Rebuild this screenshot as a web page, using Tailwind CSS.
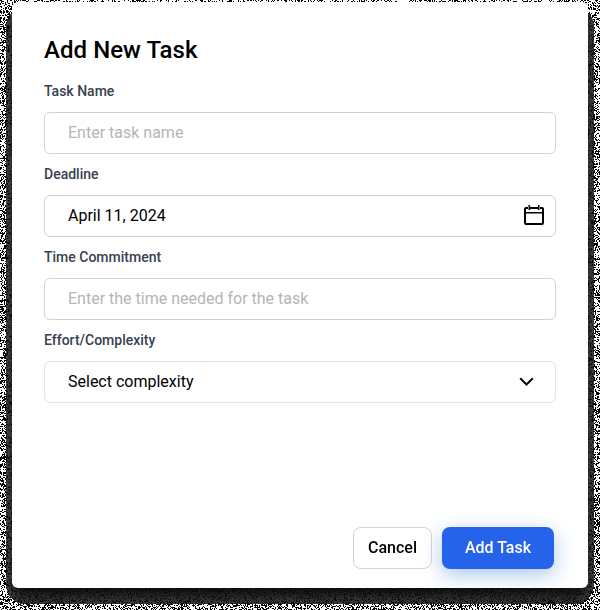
<!DOCTYPE html>
<html lang="en">
<head>
<meta charset="utf-8">
<title>Add New Task</title>
<script src="https://cdn.jsdelivr.net/npm/@tailwindcss/browser@4"></script>
</head>
<body class="relative w-[600px] h-[610px] overflow-hidden bg-white font-['Roboto',sans-serif] text-black">
<canvas id="grain" width="600" height="610" class="absolute inset-0" aria-hidden="true"></canvas>
<main class="relative mx-3 mt-0.5 h-[586px] rounded-md bg-white px-8 pt-8 flex flex-col overflow-hidden">
  <h1 class="text-2xl leading-8 font-medium tracking-[0.05px]">Add New Task</h1>
  <form class="flex flex-col mt-[15px]">
    <label class="text-sm leading-5 font-medium text-[#374151]">Task Name</label>
    <div class="mt-[11px] h-[42px] rounded-md border border-[#d1d1db] px-[23px] flex items-center text-base text-[#b5b5b5]">Enter task name</div>
    <label class="mt-[10px] text-sm leading-5 font-medium text-[#374151]">Deadline</label>
    <div class="mt-[11px] h-[42px] rounded-md border border-[#d1d1db] pl-[23px] pr-[9px] flex items-center justify-between text-base">
      <span>April 11, 2024</span>
      <svg class="size-6" viewBox="0 0 24 24" fill="none" stroke="black" stroke-width="2"><path d="M6 4H4A1 1 0 0 0 3 5V19A1 1 0 0 0 4 20H20A1 1 0 0 0 21 19V5A1 1 0 0 0 20 4H18M8 4H16"/><path stroke-width="1.600" d="M3 8.800H21M7.300 1V6M16.700 1V6"/></svg>
    </div>
    <label class="mt-[10px] text-sm leading-5 font-medium text-[#374151]">Time Commitment</label>
    <div class="mt-[11px] h-[42px] rounded-md border border-[#d1d1db] px-[23px] flex items-center text-base text-[#b5b5b5]">Enter the time needed for the task</div>
    <label class="mt-[10px] text-sm leading-5 font-medium text-[#374151]">Effort/Complexity</label>
    <div class="mt-[11px] h-[42px] rounded-md border border-[#e4e4e7] pl-[23px] pr-[21px] flex items-center justify-between text-base">
      <span>Select complexity</span>
      <svg class="w-[15px] h-[9px] mb-px" viewBox="0 0 15 9" fill="none" stroke="#09090b" stroke-width="2"><path d="M1.200 1.200L7.500 7.500L13.800 1.200"/></svg>
    </div>
    <div class="mt-[124px] mr-0.5 flex justify-end gap-[10px]">
      <button type="button" class="w-[79px] h-[42px] rounded-lg border border-[#d4d4d8] bg-white text-base font-medium">Cancel</button>
      <button type="button" class="w-[112px] h-[42px] rounded-lg bg-[#2563eb] text-base font-medium text-white shadow-[0_6px_20px_rgba(50,125,205,0.42)]">Add Task</button>
    </div>
  </form>
</main>
<script>
  // Grainy shadow: dense and dark beside the card, dithered to black and white further out.
  const ctx = document.getElementById('grain').getContext('2d');
  const img = ctx.createImageData(600, 610);
  let seed = 7;
  const rnd = () => {
    seed = (seed + 0x6D2B79F5) | 0;
    let t = Math.imul(seed ^ (seed >>> 15), 1 | seed);
    t = (t + Math.imul(t ^ (t >>> 7), 61 | t)) ^ t;
    return ((t ^ (t >>> 14)) >>> 0) / 4294967296;
  };
  for (let y = 0; y < 610; y++) for (let x = 0; x < 600; x++) {
    const r = 20, dx = Math.abs(x - 299.5) - (294 - r), dy = Math.abs(y - 305) - (299 - r);
    const d = Math.hypot(Math.max(dx, 0), Math.max(dy, 0)) + Math.min(Math.max(dx, dy), 0) - r;
    const base = Math.max(8, 56 + d * 3) - (y > 588 ? 4 : 0);
    let v;
    if (d < 0) v = rnd() < 0.25 + Math.max(0, (d + 3) * 0.06) ? 6 + rnd() * 12 : base + rnd() * 18;
    else v = rnd() < (y < 2 ? 0.36 : 0.42) ? 0 : 255;
    const i = (y * 600 + x) * 4;
    img.data[i] = img.data[i + 1] = img.data[i + 2] = v;
    img.data[i + 3] = 255;
  }
  ctx.putImageData(img, 0, 0);
</script>
</body>
</html>
